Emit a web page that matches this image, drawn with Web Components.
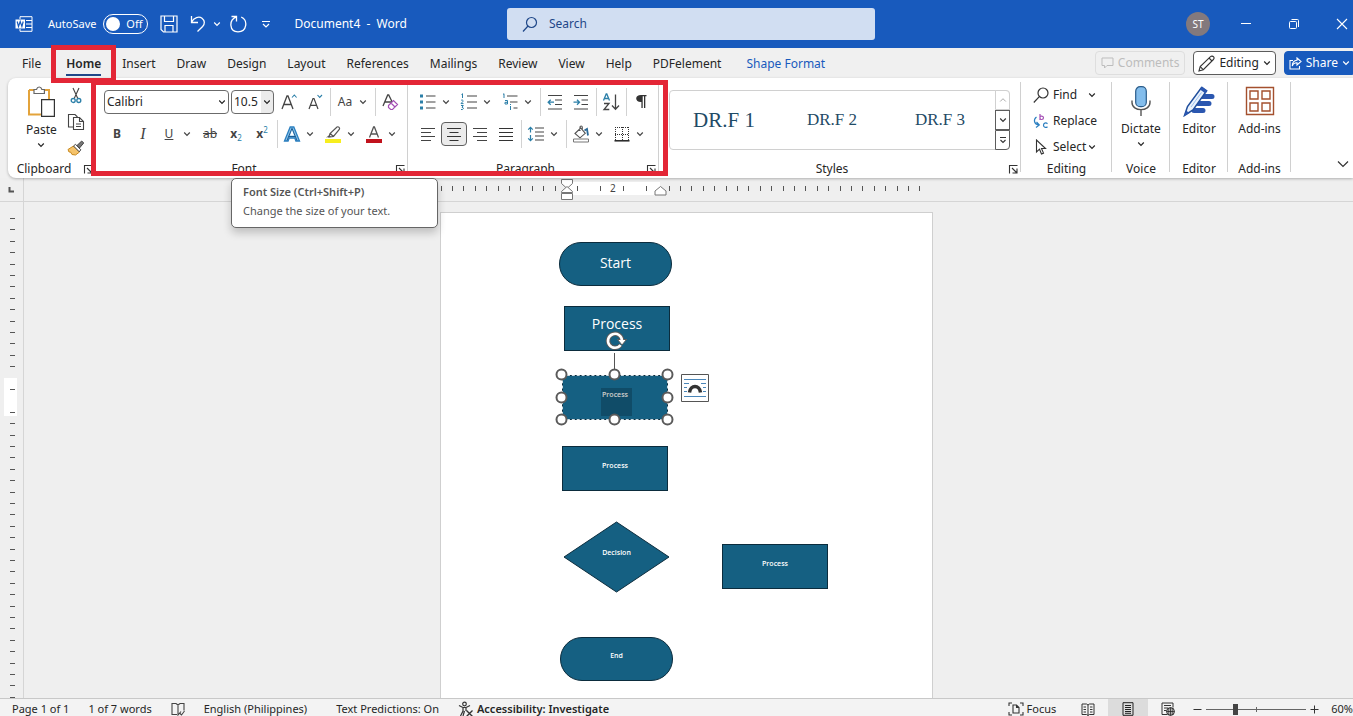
<!DOCTYPE html>
<html lang="en">
<head>
<meta charset="utf-8">
<title>Document4 - Word</title>
<style>
  html, body { height: 100%; margin: 0; }
  body { overflow: hidden; background: #f0f0f0; color: #262626; font: 12px/16px "Noto Sans", "Open Sans", sans-serif; }
</style>
</head>
<body>
<word-app></word-app>

<script>
/* ---------- icon artwork: [width, height, markup] ---------- */
const ICONS = {
  word: [18, 16, '<g fill="none" stroke="#fff"><path d="M5 3V.7h12v14.6H5V13"/><path d="M11 4.5h6M11 8h6M11 11.500h6"/></g><path d="M.5 3.500h9.500v9H.5z" fill="#fff"/><path d="M2.200 5.500l1.300 5 1.700-5 1.700 5 1.300-5" fill="none" stroke="#185abd" stroke-width="1.200"/>'],
  save: [18, 18, '<g fill="none" stroke="#fff" stroke-width="1.200"><path d="M1 1h16v16H3.500L1 14.500z"/><path d="M4.500 1v5.500h9V1M5 17v-6.500h8V17"/></g>'],
  undo: [16, 18, '<path d="M1.500 1v6.500H8M1.500 7.300C4 2.500 9 1 12 3.300c3 2.300 3 5.700.6 8.200L7.500 16.500" fill="none" stroke="#fff" stroke-width="1.300"/>'],
  redo: [18, 18, '<path d="M2.500 1.500h5v5M7.300 1.800C-.5 5 .2 16.800 9 16.800c9 0 10.300-11.500 3.200-14.800" fill="none" stroke="#fff" stroke-width="1.300"/>'],
  qat: [10, 8, '<path d="M1 1.500h8M2 4l3 3 3-3" fill="none" stroke="#fff" stroke-width="1.200"/>'],
  search: [16, 16, '<g fill="none" stroke="#1f4788" stroke-width="1.200"><circle cx="9.500" cy="6.500" r="5"/><path d="M6 10L1 15.500"/></g>'],
  min: [12, 12, '<path d="M1 5.500h10" stroke="#fff"/>'],
  restore: [12, 12, '<g fill="none" stroke="#fff"><rect x="1.500" y="3.500" width="7" height="7" rx="1"/><path d="M3.500 1.500h6a1 1 0 0 1 1 1v6.500"/></g>'],
  close: [12, 12, '<path d="M1 1l10 10M11 1L1 11" stroke="#fff" stroke-width="1.100"/>'],
  chev: [8, 6, '<path d="M1.200 1.500L4 4.300 6.800 1.500" fill="none" stroke="currentColor" stroke-width="1.200"/>'],
  chevup: [8, 6, '<path d="M1.200 4.500L4 1.700 6.800 4.500" fill="none" stroke="currentColor"/>'],
  chevbig: [12, 8, '<path d="M1 1.500l5 5 5-5" fill="none" stroke="#333" stroke-width="1.200"/>'],
  more: [8, 8, '<path d="M1 1.500h6M1.500 4L4 6.500 6.500 4" fill="none" stroke="#333" stroke-width="1.100"/>'],
  comment: [13, 12, '<path d="M1 1h11v7.500H6L3.500 11V8.500H1z" fill="none" stroke="currentColor"/>'],
  pencil: [17, 17, '<g fill="none" stroke="#333" stroke-width="1.100"><path d="M1 16l1.200-4.500L12.500 1.700c1-1 2.300-.6 2.900 0s.9 1.800 0 2.800L5.300 14.700z"/><path d="M11 3l3 3M2.200 11.600l3 3"/></g>'],
  share: [13, 13, '<g fill="none" stroke="#fff" stroke-width="1.100"><path d="M4 3.500H1v8.500h9.500V9"/><path d="M8 1l4 3.500L8 8V5.800C5.500 5.700 4 7 3.300 9 3.300 5.500 5 3.400 8 3.200z"/></g>'],
  paste: [30, 32, '<path d="M3 4h20v12M15 28.500H3V4" fill="#fff" stroke="#e3a33b" stroke-width="2"/><path d="M5 6h16v20H5z" fill="#fff"/><path d="M8 7.500V3.500h2.500C11 1.800 12 1 13.200 1s2.200.8 2.700 2.500h2.500v4z" fill="#fff" stroke="#666" stroke-width="1.200"/><path d="M15.600 13.600h12.800v16.800H15.600z" fill="#fff" stroke="#333" stroke-width="1.200"/>'],
  cut: [12, 18, '<path d="M3 1l4.800 10.500M9 1L4.200 11.500" stroke="#444" stroke-width="1.100"/><g fill="none" stroke="#2b7fa8" stroke-width="1.300"><circle cx="3.200" cy="13.500" r="2"/><circle cx="8.800" cy="13.500" r="2"/></g>'],
  copy: [18, 18, '<g fill="#fff" stroke="#444" stroke-width="1.100"><path d="M6 14H1.500V1.500H8L10.500 4"/><path d="M6.500 4.500h6l4 4v8h-10z"/><path d="M12.500 4.500v4h4M9 11h5M9 13.500h5" fill="none"/></g>'],
  brush: [18, 16, '<path d="M1 9.500l5.500-3.500 6 6L8.500 15 5 14.500 3.500 12 2 12z" fill="#f5c36b" stroke="#c98a1e"/><path d="M6.500 6l2-1.700 5.300 5.500-1.500 2z" fill="#fff" stroke="#444"/><path d="M10 5.500L14.700 1l2 2L12.500 8z" fill="#777" stroke="#444"/>'],
  growfont: [18, 18, '<path d="M2 16L7 3h1l5 13M3.800 11.500h7.400" fill="none" stroke="#444" stroke-width="1.300"/><path d="M12 4.500L14.300 2l2.300 2.500" fill="none" stroke="#2b7fa8" stroke-width="1.100"/>'],
  shrinkfont: [16, 18, '<path d="M2 16L6 5.500h1L11 16M3.500 12.300h6" fill="none" stroke="#444" stroke-width="1.200"/><path d="M10.500 2l2.200 2.400L15 2" fill="none" stroke="#2b7fa8" stroke-width="1.100"/>'],
  clear: [18, 18, '<path d="M2 13L6.700 2h1l4 8M3.700 9h6.500" fill="none" stroke="#444" stroke-width="1.300"/><path d="M7.500 12.500l5-5 4 4-5 5H9.700L7.500 14.500zM10 10l4 4" fill="#fff" stroke="#a44eb5" stroke-width="1.200"/>'],
  texteffect: [18, 18, '<path d="M1.500 16L7.200 2h3.600l5.700 14h-3.600l-1.100-3H6.200l-1.100 3z" fill="#8cc4ea" stroke="#2a7fc0" stroke-width="1.300"/><path d="M7 10.500L9 5l2 5.500z" fill="#fff"/><path d="M4 15.500L9 3.300l5 12.200M5.600 11.500h6.800" fill="none" stroke="#1c5c94"/>'],
  highlight: [18, 18, '<path d="M5 12l1-3.500 7-6.500c1.500-.8 3.300.8 2.300 2.500L9.500 11.500zM6.200 8.500l3.200 3" fill="#fff" stroke="#555" stroke-width="1.200"/><path d="M2 12.500l3.500-2.500 1.500 1.700z" fill="#555"/><path d="M1 14h16v4H1z" fill="#f7ee1e"/>'],
  fontcolor: [18, 18, '<path d="M4.500 12.500L8.600 2h.8l4.100 10.500M6 9h6" fill="none" stroke="#555" stroke-width="1.300"/><path d="M1 14h16v4H1z" fill="#c1121c"/>'],
  bullets: [18, 16, '<path d="M1 .5h3v3H1zM1 6.500h3v3H1zM1 12.500h3v3H1z" fill="#2b7fa8"/><path d="M7 2h9.500M7 8h9.500M7 14h9.500" stroke="#444" stroke-width="1.200"/>'],
  numbers: [18, 18, '<path d="M7 3h10M7 9h10M7 15h10" stroke="#444" stroke-width="1.200"/><path d="M1.500 1.500l1-.8V5M1 7.500c1-1 2.500-.3 2 .8L1 10.600h2.500M1 12.500h2.300L2 14.300c2 0 2 2.700-1 2.200" fill="none" stroke="#2b7fa8"/>'],
  multi: [18, 18, '<path d="M6 3h10.500M9 9h7.500M12.500 15h4" stroke="#444" stroke-width="1.200"/><path d="M2 1.500l1-.8V5M4 7.500h2.500v3.500H4V9.300h2.500M9.500 13v4M9.500 11v1" fill="none" stroke="#2b7fa8"/>'],
  outdent: [16, 16, '<path d="M1 1.500h14M8 6h7M8 10.500h7M1 15h14" stroke="#444" stroke-width="1.200"/><path d="M7 8.200H1.200M3.700 5.700L1.200 8.200l2.500 2.500" fill="none" stroke="#2b7fa8" stroke-width="1.300"/>'],
  indent: [16, 16, '<path d="M1 1.500h14M8.500 6h6.500M8.500 10.500h6.500M1 15h14" stroke="#444" stroke-width="1.200"/><path d="M.5 8.200h6M4 5.700l2.500 2.500L4 10.700" fill="none" stroke="#2b7fa8" stroke-width="1.300"/>'],
  sort: [18, 18, '<path d="M1.500 7.500L4.200 1h.6l2.700 6.500M2.500 5.500h4" fill="none" stroke="#2b7fa8" stroke-width="1.300"/><path d="M2 10.500h5L2 16.500h5.300M13.500 1.500V16M10 12.500l3.500 3.700 3.500-3.700" fill="none" stroke="#444" stroke-width="1.300"/>'],
  pilcrow: [12, 16, '<path d="M6 1h5.500v1.200H10.300V14H9V2.200H7.700V14H6.400V8C3 8.200 1.200 6.500 1.200 4.500S3 1 6 1z" fill="#333"/>'],
  aleft: [16, 14, '<path d="M1 1.500h14M1 5.500h10M1 9.500h14M1 13.500h10" stroke="#444"/>'],
  acenter: [16, 14, '<path d="M1 1.500h14M3.500 5.500h9M1 9.500h14M3.500 13.500h9" stroke="#333"/>'],
  aright: [16, 14, '<path d="M1 1.500h14M5 5.500h10M1 9.500h14M5 13.500h10" stroke="#444"/>'],
  ajust: [16, 14, '<path d="M1 1.500h14M1 5.500h14M1 9.500h14M1 13.500h14" stroke="#333"/>'],
  spacing: [18, 16, '<path d="M8 2h9M8 6h9M8 10h9M8 14h9" stroke="#444" stroke-width="1.200"/><path d="M3.500 1.500v5M1.200 3.700l2.300-2.400 2.300 2.400M3.500 9v5.500M1.200 12.300l2.300 2.400 2.300-2.400" fill="none" stroke="#2b7fa8" stroke-width="1.200"/>'],
  fill: [18, 18, '<path d="M3 8.500L8.700 3l4.600 5.300L8 12.800zM8 6V2.300c0-1.700 2.300-1.700 2.300 0V5" fill="#fff" stroke="#555" stroke-width="1.100"/><path d="M12.500 5.500l2.500-1.500 1 6.500" fill="none" stroke="#2b6a98" stroke-width="1.800"/><path d="M1.500 14h15v3h-15z" fill="#fff" stroke="#777"/>'],
  borders: [16, 16, '<path d="M1 1.500h14M1.500 1v14M14.500 1v14M8.500 1v14M1 8.500h14" stroke="#333" stroke-dasharray="1 1" fill="none"/><path d="M.5 14.800h15" stroke="#222" stroke-width="1.500"/>'],
  launcher: [10, 10, '<path d="M1.500 9.500v-8h8M4 4l4.500 4.500M9 4.500V9H4.500" fill="none" stroke="#333" stroke-width="1.100"/>'],
  find: [16, 16, '<g fill="none" stroke="#333" stroke-width="1.200"><circle cx="10" cy="6" r="5"/><path d="M6.300 9.700L.8 15.500"/></g>'],
  replace: [16, 16, '<path d="M7 1v6M7 4.300c0-1.700 3.500-1.700 3.500.5S7 7 7 5" fill="none" stroke="#a44eb5" stroke-width="1.200"/><path d="M14.500 10.700c-1.700-1.500-4-.5-4 1.500s2.300 3 4 1.500M3.500 4C.5 6 .5 11 5.500 12M3.500 9l2.800 3L3 14.500" fill="none" stroke="#2b7fc0" stroke-width="1.200"/>'],
  select: [12, 16, '<path d="M1.500 1v12l3-2.800 2 4.800 2-.9-2-4.600h4z" fill="#fff" stroke="#333" stroke-width="1.100"/>'],
  mic: [20, 32, '<rect x="4.700" y="1.700" width="10.600" height="20" rx="4.500" fill="#83bdec" stroke="#2a5c8a" stroke-width="1.200"/><path d="M1 15.500v2c0 9.500 18 9.500 18 0v-2M10 24.700V31" fill="none" stroke="#555" stroke-width="1.400"/>'],
  editor: [32, 32, '<g stroke="#2b57b0" stroke-width="5" stroke-linecap="round"><path d="M19 11.500h10M15 18.500h11M11 25.500h9"/></g><path d="M1.500 30.500l3-9L18.500 2.500l5 3.500L10 25z" fill="#eaf2fc" stroke="#1f4e9c" stroke-width="1.500"/><path d="M17 4.500L19 1.500l5.500 4-2 3zM1 31l2-5.500 3.500 2.500z" fill="#2b57b0"/><path d="M8 22L18.500 7.500" stroke="#9cc0ee"/>'],
  addins: [32, 32, '<g fill="none" stroke="#a4502e" stroke-width="1.400"><path d="M2.500 2.500h27v27h-27z"/><path d="M6 6h8v8H6zM18 6h8v8h-8zM6 18h8v8H6zM18 18h8v8h-8z"/></g>'],
  proof: [14, 14, '<path d="M6 12.500H1V1.500h4L7 3l2-1.500h4v7M7 3v10l3-3.500M8.500 11l2 2 3-4" fill="none" stroke="#444" stroke-width="1.100"/>'],
  access: [16, 16, '<g fill="none" stroke="#333" stroke-width="1.200"><circle cx="6.500" cy="3" r="1.800"/><path d="M1 4.500l4 2v3.500L2.500 15M12 4.500l-4 2v3.500M5 6.500h3M6.500 10L5 15"/><path d="M8.500 9.500l6 6M14.500 9.500l-6 6" stroke-width="1.400"/></g>'],
  focus: [16, 14, '<g fill="none" stroke="#333" stroke-width="1.100"><path d="M4 1H1v3M12 1h3v3M4 13H1v-3M12 13h3v-3"/><path d="M5 3h3.500L11 5.500V11H5zM8.500 3v2.500H11"/></g>'],
  read: [14, 13, '<path d="M7 2v10.500M1 1h4.500L7 2l1.500-1H13v10.500H8.500L7 12.500l-1.500-1H1zM2.500 4H5M2.500 6.500H5M2.500 9H5M9 4h2.500M9 6.500h2.500M9 9h2.500" fill="none" stroke="#333"/>'],
  print: [12, 14, '<path d="M1 .7h10v12.600H1zM3 3.500h6M3 5.500h6M3 7.500h6M3 9.500h6M3 11.300h6" fill="none" stroke="#222"/>'],
  web: [14, 14, '<g fill="none" stroke="#333"><path d="M6 12.500H1V1h11v4.500M3 3.500h7M3 6h4M3 8.500h2.500"/></g><circle cx="9.500" cy="9.500" r="3.900" fill="#ddd" stroke="#222"/><path d="M5.600 9.500h7.800M9.500 5.600v7.800M7.800 6v7M11.200 6v7" stroke="#222" stroke-width=".8"/>'],
  minus: [9, 9, '<path d="M.5 4.500h8" stroke="#333"/>'],
  plus: [9, 9, '<path d="M.5 4.500h8M4.500.5v8" stroke="#333"/>'],
  wrap: [28, 28, '<path d="M.5.5h27v27H.5z" fill="#fff" stroke="#555"/><path d="M3 5.500h22M3 9.500h5M20 9.500h5M3 13.500h3M22 13.500h3M3 17.500h3M22 17.500h3M3 22.500h22" stroke="#4a86b8"/><path d="M8.500 18.500c1-8 10-8 11 0" fill="none" stroke="#333" stroke-width="3.500"/>'],
  rotate: [22, 20, '<path d="M15.600 14A7 7 0 1 1 17 9" fill="none" stroke="#5a5a5a" stroke-width="4.500"/><path d="M12.500 8.500h9L17 14z" fill="#fff" stroke="#5a5a5a"/><path d="M15.600 14A7 7 0 1 1 17 9.500" fill="none" stroke="#fff" stroke-width="2.600"/>']
};

const define = (name, html, setup) => {
  const template = document.createElement('template');
  template.innerHTML = html;
  customElements.define(name, class extends HTMLElement {
    constructor() {
      super();
      this.attachShadow({ mode: 'open' }).append(template.content.cloneNode(true));
    }
    connectedCallback() {
      if (!this.ready) { this.ready = true; if (setup) setup(this, this.shadowRoot); }
    }
  });
};

define('ui-icon', '<style>:host{display:inline-flex;flex:none}svg{display:block}</style>', (el, root) => {
  const [w, h, art] = ICONS[el.getAttribute('name')];
  root.innerHTML += `<svg width="${w}" height="${h}" viewBox="0 0 ${w} ${h}" aria-hidden="true">${art}</svg>`;
});

/* Small ribbon command; "split" adds a drop-down arrow of its own. */
define('tool-button', `
<style>
  :host { display: flex; flex: none; align-items: center; }
  :host([split]) { padding: 0 4px 0 1px; }
  button { display: flex; align-items: center; justify-content: center; width: 26px; height: 24px; box-sizing: border-box;
    padding: 0; border: 1px solid transparent; border-radius: 4px; background: none; color: #444; font: inherit; white-space: nowrap; }
  :host([split]) .main { width: 24px; }
  .drop { width: 12px; display: none; }
  :host([split]) .drop { display: flex; }
  :host([pressed]) .main { background: #ebebeb; border-color: #5f5f5f; }
</style>
<button class="main"><span><slot></slot></span></button><button class="drop"><ui-icon name="chev"></ui-icon></button>`,
(el, root) => {
  const [main, drop] = root.querySelectorAll('button');
  main.setAttribute('aria-label', el.getAttribute('label'));
  drop.setAttribute('aria-label', el.getAttribute('label') + ' options');
  if (!el.hasAttribute('split')) drop.remove();
  if (el.hasAttribute('icon')) {
    const icon = document.createElement('ui-icon');
    icon.setAttribute('name', el.getAttribute('icon'));
    main.replaceChildren(icon);
  }
});

/* Tall ribbon command: picture, caption and optional arrow. */
define('large-button', `
<style>
  :host { display: block; flex: none; }
  button { display: flex; flex-direction: column; align-items: center; padding: 0; border: 0; background: none; font: inherit; color: inherit; }
  .art { height: 32px; display: flex; align-items: center; margin-bottom: 4px; }
  .arrow { height: 14px; display: flex; align-items: center; }
</style>
<button><span class="art"></span><slot></slot><span class="arrow"></span></button>`,
(el, root) => {
  root.querySelector('.art').innerHTML = `<ui-icon name="${el.getAttribute('icon')}"></ui-icon>`;
  if (el.hasAttribute('menu')) root.querySelector('.arrow').innerHTML = '<ui-icon name="chev"></ui-icon>';
});

define('tool-sep', '<style>:host{display:block;flex:none;width:4px;height:28px;margin:-2px 0;background:linear-gradient(#d2d2d2,#d2d2d2) center/1px 100% no-repeat}</style>');

define('ribbon-group', `
<style>
  :host { display: flex; flex: none; flex-direction: column; box-sizing: border-box; position: relative; }
  :host::after { content: ""; position: absolute; right: 0; top: 4px; bottom: 6px; width: 1px; background: #d0d0d0; }
  .body { flex: 1; min-height: 0; }
  footer { display: flex; height: 18px; line-height: 18px; }
  .name { flex: 1; text-align: center; }
  button { width: 16px; padding: 0; border: 0; background: none; display: flex; align-items: center; justify-content: center; }
</style>
<div class="body"><slot></slot></div>
<footer><span class="name"></span></footer>`,
(el, root) => {
  root.querySelector('.name').textContent = el.getAttribute('name');
  if (el.hasAttribute('launcher'))
    root.querySelector('footer').insertAdjacentHTML('beforeend', `<button aria-label="${el.getAttribute('name')} settings"><ui-icon name="launcher"></ui-icon></button>`);
});

/* Red rectangular frame laid over its container. */
define('marker-frame', '<style>:host{display:block;position:absolute;box-sizing:border-box;border:5px solid #e32636;pointer-events:none;z-index:3}</style>');

define('title-bar', `
<style>
  :host { display: grid; flex: none; grid-template-columns: minmax(0, 507fr) 368px minmax(0, 478fr); align-items: center; height: 48px; background: #185abd; color: #fff; }
  .left { display: flex; align-items: center; padding-left: 15px; white-space: nowrap; }
  .auto { display: flex; align-items: center; gap: 7px; margin-left: 15px; font-size: 11px; }
  .switch { position: relative; display: flex; align-items: center; justify-content: flex-end; width: 45px; height: 20px; padding-right: 5px; box-sizing: border-box; border: 1px solid #fff; border-radius: 10px; }
  .switch input { position: absolute; left: 2px; top: 2px; width: 14px; height: 14px; margin: 0; appearance: none; background: #fff; border-radius: 50%; }
  button { display: flex; align-items: center; justify-content: center; padding: 0; border: 0; background: none; height: 24px; }
  .save { width: 28px; margin-left: 7px; }
  .undo { width: 30px; }
  .drop { width: 8px; color: #fff; }
  .redo { width: 34px; }
  .qat { width: 22px; }
  h1 { margin: 0 0 0 17px; font-size: 12px; font-weight: 400; white-space: pre; }
  .search { display: flex; align-items: center; gap: 11px; height: 32px; box-sizing: border-box; padding-left: 15px; background: #d1def2; border-radius: 3px; }
  .search input { flex: 1; min-width: 0; border: 0; padding: 0; background: none; font: inherit; }
  .search input::placeholder { color: #1f4788; opacity: 1; }
  .right { display: flex; align-items: center; justify-content: flex-end; padding-right: 5px; }
  .avatar { width: 24px; height: 24px; border-radius: 50%; background: #83797d; color: #fff; font-size: 10px; margin-right: 30px; font-family: inherit; }
  .win { width: 12px; margin-left: 36px; }
  .win.first { margin-left: 0; }
</style>
<div class="left">
  <ui-icon name="word"></ui-icon>
  <label class="auto">AutoSave <span class="switch"><input type="checkbox" role="switch">Off</span></label>
  <button class="save" aria-label="Save"><ui-icon name="save"></ui-icon></button>
  <button class="undo" aria-label="Undo"><ui-icon name="undo"></ui-icon></button>
  <button class="drop" aria-label="Undo list"><ui-icon name="chev"></ui-icon></button>
  <button class="redo" aria-label="Repeat"><ui-icon name="redo"></ui-icon></button>
  <button class="qat" aria-label="Customize toolbar"><ui-icon name="qat"></ui-icon></button>
  <h1>Document4  -  Word</h1>
</div>
<label class="search"><ui-icon name="search"></ui-icon><input type="text" placeholder="Search" aria-label="Search"></label>
<div class="right">
  <button class="avatar" aria-label="Account">ST</button>
  <button class="win first" aria-label="Minimize"><ui-icon name="min"></ui-icon></button>
  <button class="win" aria-label="Restore"><ui-icon name="restore"></ui-icon></button>
  <button class="win" aria-label="Close"><ui-icon name="close"></ui-icon></button>
</div>`);

define('ribbon-tabs', `
<style>
  :host { display: flex; flex: none; justify-content: space-between; height: 30px; }
  nav { display: flex; align-items: center; gap: 21px; padding: 2px 0 0 22px; white-space: nowrap; }
  a { position: relative; color: inherit; text-decoration: none; line-height: 20px; }
  a.on { margin: 2px 0 0 4px; font-weight: 600; border-bottom: 2px solid #1f4788; }
  a.blue { color: #185abd; margin-left: 4px; }
  marker-frame { left: -15px; right: -15px; top: -9px; bottom: -9px; }
  .actions { display: flex; align-items: center; gap: 8px; }
  button { display: flex; align-items: center; gap: 4px; height: 24px; box-sizing: border-box; padding: 0 4px; border: 1px solid #5c5c5c; border-radius: 4px; background: #fff; font: inherit; color: #262626; }
  button:disabled { border-color: #dedede; background: none; color: #bdbdbd; padding: 0 5px; }
  .share { background: #185abd; border-color: #185abd; color: #fff; border-radius: 4px 0 0 4px; padding-right: 2px; }
</style>
<nav>
  <a href="#file">File</a>
  <a href="#home" class="on">Home<marker-frame></marker-frame></a>
  <a href="#insert">Insert</a><a href="#draw">Draw</a><a href="#design">Design</a><a href="#layout">Layout</a>
  <a href="#references">References</a><a href="#mailings">Mailings</a><a href="#review">Review</a><a href="#view">View</a>
  <a href="#help">Help</a><a href="#pdf">PDFelement</a><a href="#shape" class="blue">Shape Format</a>
</nav>
<div class="actions">
  <button disabled><ui-icon name="comment"></ui-icon>Comments</button>
  <button><ui-icon name="pencil"></ui-icon>Editing<ui-icon name="chev"></ui-icon></button>
  <button class="share"><ui-icon name="share"></ui-icon>Share<ui-icon name="chev"></ui-icon></button>
</div>`);

define('hover-tip', `
<style>
  :host { display: block; position: absolute; z-index: 4; width: 207px; height: 50px; box-sizing: border-box; padding: 3px 11px; background: #fff; border: 1px solid #666; border-radius: 5px; box-shadow: 0 5px 8px #0003; color: #555; font-size: 11px; line-height: 19px; white-space: nowrap; }
  b { display: block; font-weight: 600; }
</style>
<b><slot name="title"></slot></b><slot></slot>`);

define('style-gallery', `
<style>
  :host { display: flex; height: 60px; box-sizing: border-box; border: 1px solid #d0d0d0; border-radius: 4px; }
  .list { flex: 1; min-width: 0; overflow: hidden; display: flex; }
  .list button { width: 108px; flex: none; padding: 0; border: 0; background: none; color: #1f4b66; font: 17px "Liberation Serif", serif; }
  .list .big { font-size: 21px; }
  .scroll { display: flex; flex-direction: column; width: 15px; margin: -1px; }
  .scroll button { flex: 1; display: flex; align-items: center; justify-content: center; box-sizing: border-box; padding: 0; border: 1px solid #5c5c5c; background: #fff; color: #333; }
  .scroll button:first-child { border-color: #d0d0d0; border-radius: 0 4px 0 0; color: #aaa; }
  .scroll button:last-child { border-radius: 0 0 4px 0; }
</style>
<div class="list"><button class="big">DR.F 1</button><button>DR.F 2</button><button>DR.F 3</button></div>
<div class="scroll"><button aria-label="Previous row"><ui-icon name="chevup"></ui-icon></button><button aria-label="Next row"><ui-icon name="chev"></ui-icon></button><button aria-label="More styles"><ui-icon name="more"></ui-icon></button></div>`);

define('ribbon-panel', `
<style>
  :host { display: flex; flex: none; height: 100px; margin-left: 8px; background: #fff; border-radius: 8px 0 0 8px; box-shadow: 0 1px 3px #0004; position: relative; z-index: 2; }
  .row { display: flex; align-items: center; height: 24px; }
  .rows { display: flex; flex-direction: column; gap: 8px; padding: 12px 0 0 8px; }
  .rows.para { padding-left: 7px; }
  .marked { display: flex; position: relative; }
  .marked > marker-frame { inset: 2px -9px 2px -5px; }
  .clip { width: 88px; } .font { width: 312px; } .paragraph { width: 251px; }
  .styles { flex: 1; min-width: 0; } .editing { width: 91px; } .one { width: 58px; } .adds { width: 63px; }
  .cliprow { display: flex; gap: 9px; padding: 8px 0 0 18px; }
  .small { display: flex; flex-direction: column; gap: 6px; }
  .small button { display: flex; align-items: center; height: 20px; min-width: 20px; padding: 0; border: 0; background: none; font: inherit; color: inherit; gap: 4px; }
  .cliprow .small button { justify-content: center; }
  .editing .small { padding: 7px 0 0 12px; }
  .ico { width: 16px; display: flex; justify-content: center; }
  .far { margin-left: 7px; }
  .tight { margin-left: -2px; }
  .centred { display: flex; justify-content: center; padding-top: 7px; }
  .combo { position: relative; display: flex; align-items: center; height: 24px; margin-right: 2px; box-sizing: border-box; border: 1px solid #6b6b6b; border-radius: 4px; overflow: hidden; }
  .combo select { appearance: none; width: 100%; height: 100%; border: 0; background: none; padding: 0 0 0 2px; font: inherit; color: #262626; }
  .combo ui-icon { position: absolute; right: 2px; pointer-events: none; }
  .family { width: 125px; }
  .size { width: 43px; background: linear-gradient(#ebebeb, #ebebeb) right/12px 100% no-repeat; }
  hover-tip { left: 135px; top: 100px; }
  style-gallery { margin: 12px 11px 0 10px; }
  .tail { width: 62px; flex: none; display: flex; align-items: flex-end; justify-content: flex-end; }
  .tail button { padding: 0; border: 0; background: none; margin: 0 4px 10px 0; height: 8px; display: flex; }
  i.serif { font-family: "Liberation Serif", serif; font-size: 16px; }
  sub, sup { font-size: 8px; line-height: 0; color: #2b7fa8; }
</style>
<ribbon-group class="clip" name="Clipboard" launcher>
  <div class="cliprow">
    <large-button icon="paste" menu>Paste</large-button>
    <div class="small">
      <button aria-label="Cut"><ui-icon name="cut"></ui-icon></button>
      <button aria-label="Copy"><ui-icon name="copy"></ui-icon></button>
      <button aria-label="Format Painter"><ui-icon name="brush"></ui-icon></button>
    </div>
  </div>
</ribbon-group>
<div class="marked">
  <ribbon-group class="font" name="Font" launcher>
    <div class="rows">
      <div class="row">
        <span class="combo family"><select aria-label="Font"><option>Calibri</option></select><ui-icon name="chev"></ui-icon></span>
        <span class="combo size"><select aria-label="Font Size"><option>10.5</option></select><ui-icon name="chev"></ui-icon></span>
        <tool-button label="Increase Font Size" icon="growfont"></tool-button>
        <tool-button label="Decrease Font Size" icon="shrinkfont"></tool-button>
        <tool-sep></tool-sep>
        <tool-button label="Change Case" split>Aa</tool-button>
        <tool-sep></tool-sep>
        <tool-button label="Clear All Formatting" icon="clear"></tool-button>
      </div>
      <div class="row">
        <tool-button label="Bold"><b>B</b></tool-button>
        <tool-button label="Italic"><i class="serif">I</i></tool-button>
        <tool-button label="Underline" split><u>U</u></tool-button>
        <tool-button label="Strikethrough"><s>ab</s></tool-button>
        <tool-button label="Subscript"><b>x</b><sub>2</sub></tool-button>
        <tool-button label="Superscript"><b>x</b><sup>2</sup></tool-button>
        <tool-sep></tool-sep>
        <tool-button label="Text Effects" icon="texteffect" split></tool-button>
        <tool-button label="Text Highlight Color" icon="highlight" split></tool-button>
        <tool-button label="Font Color" icon="fontcolor" split></tool-button>
      </div>
    </div>
    <hover-tip role="tooltip"><span slot="title">Font Size (Ctrl+Shift+P)</span>Change the size of your text.</hover-tip>
  </ribbon-group>
  <ribbon-group class="paragraph" name="Paragraph" launcher>
    <div class="rows para">
      <div class="row">
        <tool-button label="Bullets" icon="bullets" split></tool-button>
        <tool-button label="Numbering" icon="numbers" split></tool-button>
        <tool-button label="Multilevel List" icon="multi" split></tool-button>
        <tool-sep></tool-sep>
        <tool-button label="Decrease Indent" icon="outdent"></tool-button>
        <tool-button label="Increase Indent" icon="indent"></tool-button>
        <tool-sep></tool-sep>
        <tool-button label="Sort" icon="sort"></tool-button>
        <tool-sep></tool-sep>
        <tool-button label="Show Marks" icon="pilcrow"></tool-button>
      </div>
      <div class="row">
        <tool-button label="Align Left" icon="aleft"></tool-button>
        <tool-button label="Center" icon="acenter" pressed></tool-button>
        <tool-button label="Align Right" icon="aright"></tool-button>
        <tool-button label="Justify" icon="ajust"></tool-button>
        <tool-sep></tool-sep>
        <tool-button label="Line Spacing" icon="spacing" split></tool-button>
        <tool-sep></tool-sep>
        <tool-button label="Shading" icon="fill" split></tool-button>
        <tool-button label="Borders" icon="borders" split></tool-button>
      </div>
    </div>
  </ribbon-group>
  <marker-frame></marker-frame>
</div>
<ribbon-group class="styles" name="Styles" launcher><style-gallery></style-gallery></ribbon-group>
<ribbon-group class="editing" name="Editing">
  <div class="small">
    <button><span class="ico"><ui-icon name="find"></ui-icon></span>Find<ui-icon class="far" name="chev"></ui-icon></button>
    <button><span class="ico"><ui-icon name="replace"></ui-icon></span>Replace</button>
    <button><span class="ico"><ui-icon name="select"></ui-icon></span>Select<ui-icon class="tight" name="chev"></ui-icon></button>
  </div>
</ribbon-group>
<ribbon-group class="one" name="Voice"><div class="centred"><large-button icon="mic" menu>Dictate</large-button></div></ribbon-group>
<ribbon-group class="one" name="Editor"><div class="centred"><large-button icon="editor">Editor</large-button></div></ribbon-group>
<ribbon-group class="adds" name="Add-ins"><div class="centred"><large-button icon="addins">Add-ins</large-button></div></ribbon-group>
<div class="tail"><button aria-label="Ribbon options"><ui-icon name="chevbig"></ui-icon></button></div>`);

/* Horizontal ruler: ticks fan out from the zero mark at the left margin. */
define('h-ruler', '<style>:host{display:block;width:493px;height:23px}svg{display:block}</style>', (el, root) => {
  let art = '<rect x="127" y="4" width="93" height="13" fill="#fff"/>';
  for (let i = -11; i <= 31; i++) {
    if ([0, 2, 4, 6, 8].includes(i)) continue;
    const x = Math.round(126 + i * 11.4);
    art += `<path d="M${x}.5 8v5" stroke="#555"/>`;
  }
  art += '<g fill="#fff" stroke="#777"><path d="M121.500 1.500h11v4l-5.500 5-5.500-5z"/><path d="M127 8.500l5.500 5v1h-11v-1z"/><path d="M121.500 15.500h11v6h-11z"/><path d="M220.500 8.500l5.500 4.500v4h-11v-4z"/></g><text x="170" y="14" font-size="10" fill="#444">2</text>';
  root.innerHTML += `<svg width="493" height="23">${art}</svg>`;
});

define('v-ruler', '<style>:host{display:block;flex:none;width:23px;overflow:hidden;border-right:1px solid #d5d5d5}svg{display:block}</style>', (el, root) => {
  let art = '<rect x="4" y="176" width="13" height="38" fill="#fff"/>';
  for (let i = 0; i < 80; i++) {
    if (i === 14 || i === 16) continue;
    art += `<path d="M10 ${Math.round(16 + i * 11.4)}.5h5" stroke="#555"/>`;
  }
  root.innerHTML += `<svg width="23" height="920">${art}</svg>`;
});

define('flow-shape', `
<style>
  :host { display: block; position: absolute; width: 106px; height: 45px; box-sizing: border-box; background: #156082; border: 1px solid #0b2c3d; color: #fff; text-align: center; font-size: 7px; font-weight: 600; line-height: 38px; }
  :host([kind=terminal]) { width: 113px; height: 44px; border-radius: 22px; line-height: 36px; }
  :host([large]) { font-size: 14px; font-weight: 400; line-height: 34px; }
  :host([large][kind]) { line-height: 40px; }
  :host([kind=decision]) { border: 0; height: 72px; width: 107px; line-height: 64px; background: none; isolation: isolate; }
  svg { display: none; position: absolute; inset: 0; z-index: -1; }
  :host([kind=decision]) svg { display: block; }
</style>
<svg width="107" height="72"><path d="M1 36L53.500 1 106 36 53.500 71z" fill="#156082" stroke="#0b2c3d"/></svg><slot></slot>`);

/* The shape in edit: dashed edge, eight handles, rotation grip. */
define('selection-frame', `
<style>
  :host { display: block; position: absolute; inset: -1px; border: 1px dashed #cfdde4; }
  svg { position: absolute; left: -9px; top: -43px; overflow: visible; }
  ui-icon { position: absolute; left: 42px; top: -45px; }
  .text { position: absolute; left: 38px; top: 12px; width: 31px; height: 28px; background: #0003; }
</style>
<div class="text"></div><svg width="120" height="94"></svg><ui-icon name="rotate"></ui-icon>`, (el, root) => {
  let art = '<path d="M60.500 20v18" stroke="#555"/>';
  for (const [x, y] of [[7, 41], [60, 41], [113, 41], [7, 64], [113, 64], [7, 86], [60, 86], [113, 86]])
    art += `<circle cx="${x}.5" cy="${y}.5" r="5" fill="#fff" stroke="#5a5a5a" stroke-width="2"/>`;
  root.querySelector('svg').innerHTML = art;
});

define('doc-page', `
<style>
  :host { display: block; position: relative; width: 491px; height: 640px; background: #fff; border: 1px solid #cfcfcf; font-family: "Open Sans", sans-serif; }
  .start { left: 118px; top: 29px; } .p1 { left: 123px; top: 93px; } .p2 { left: 121px; top: 162px; } .p3 { left: 121px; top: 233px; }
  .dec { left: 122px; top: 308px; } .p4 { left: 281px; top: 331px; } .end { left: 119px; top: 424px; }
  .wrap { position: absolute; left: 240px; top: 161px; padding: 0; border: 0; background: none; }
</style>
<flow-shape class="start" kind="terminal" large>Start</flow-shape>
<flow-shape class="p1" large>Process</flow-shape>
<flow-shape class="p2">Process<selection-frame></selection-frame></flow-shape>
<flow-shape class="p3">Process</flow-shape>
<flow-shape class="dec" kind="decision">Decision</flow-shape>
<flow-shape class="p4">Process</flow-shape>
<flow-shape class="end" kind="terminal">End</flow-shape>
<button class="wrap" aria-label="Layout Options"><ui-icon name="wrap"></ui-icon></button>`);

define('doc-canvas', `
<style>
  :host { display: flex; flex: 1; flex-direction: column; min-height: 0; overflow: hidden; background: #efefef; }
  .top { display: flex; flex: none; height: 23px; border-bottom: 1px solid #d5d5d5; }
  .corner { width: 23px; border-right: 1px solid #d5d5d5; }
  .corner svg { display: block; }
  .centre { flex: 1; min-width: 0; display: flex; justify-content: center; padding-right: 4px; }
  .bottom { display: flex; flex: 1; min-height: 0; }
  doc-page { margin-top: 10px; }
</style>
<div class="top"><div class="corner"><svg width="23" height="23"><path d="M9.500 9v4.500H14" fill="none" stroke="#555" stroke-width="2"/></svg></div><div class="centre"><h-ruler></h-ruler></div></div>
<div class="bottom"><v-ruler></v-ruler><div class="centre"><doc-page></doc-page></div></div>`);

define('status-bar', `
<style>
  :host { display: flex; flex: none; justify-content: space-between; align-items: flex-start; height: 18px; overflow: hidden; box-sizing: border-box; background: #f3f3f3; border-top: 1px solid #c8c8c8; font-size: 11px; white-space: nowrap; }
  div { display: flex; align-items: center; height: 20px; }
  button { display: flex; align-items: center; justify-content: center; height: 20px; padding: 0; border: 0; background: none; font: inherit; color: inherit; gap: 3px; }
  .left { padding-left: 12px; gap: 19px; }
  .pred { margin-left: 10px; }
  .acc { font-weight: 600; }
  .focus { margin-right: 12px; }
  .view { width: 40px; }
  .on { background: #dcdcdc; }
  .out { margin-left: 5px; }
  .zoom { display: flex; align-items: center; margin: 0 4px; }
  input { appearance: none; width: 100px; height: 14px; margin: 0; background: linear-gradient(#666, #666) center/100% 1px no-repeat, linear-gradient(#666, #666) center/1px 5px no-repeat; }
  input::-webkit-slider-thumb { appearance: none; width: 5px; height: 11px; background: #444; }
  .pct { margin-left: 12px; }
</style>
<div class="left"><button>Page 1 of 1</button><button>1 of 7 words</button><button aria-label="Proofing"><ui-icon name="proof"></ui-icon></button><button>English (Philippines)</button><button class="pred">Text Predictions: On</button><button class="acc"><ui-icon name="access"></ui-icon>Accessibility: Investigate</button></div>
<div><button class="focus"><ui-icon name="focus"></ui-icon>Focus</button>
<button class="view" aria-label="Read Mode"><ui-icon name="read"></ui-icon></button><button class="view on" aria-label="Print Layout"><ui-icon name="print"></ui-icon></button><button class="view" aria-label="Web Layout"><ui-icon name="web"></ui-icon></button>
<button class="out" aria-label="Zoom Out"><ui-icon name="minus"></ui-icon></button><label class="zoom"><input type="range" min="10" max="190" value="60" aria-label="Zoom"></label><button aria-label="Zoom In"><ui-icon name="plus"></ui-icon></button><button class="pct">60%</button></div>`);

define('word-app', `
<style>:host { display: flex; flex-direction: column; height: 100vh; overflow: hidden; }</style>
<title-bar></title-bar><ribbon-tabs></ribbon-tabs><ribbon-panel></ribbon-panel><doc-canvas></doc-canvas><status-bar></status-bar>`);
</script>
</body>
</html>
